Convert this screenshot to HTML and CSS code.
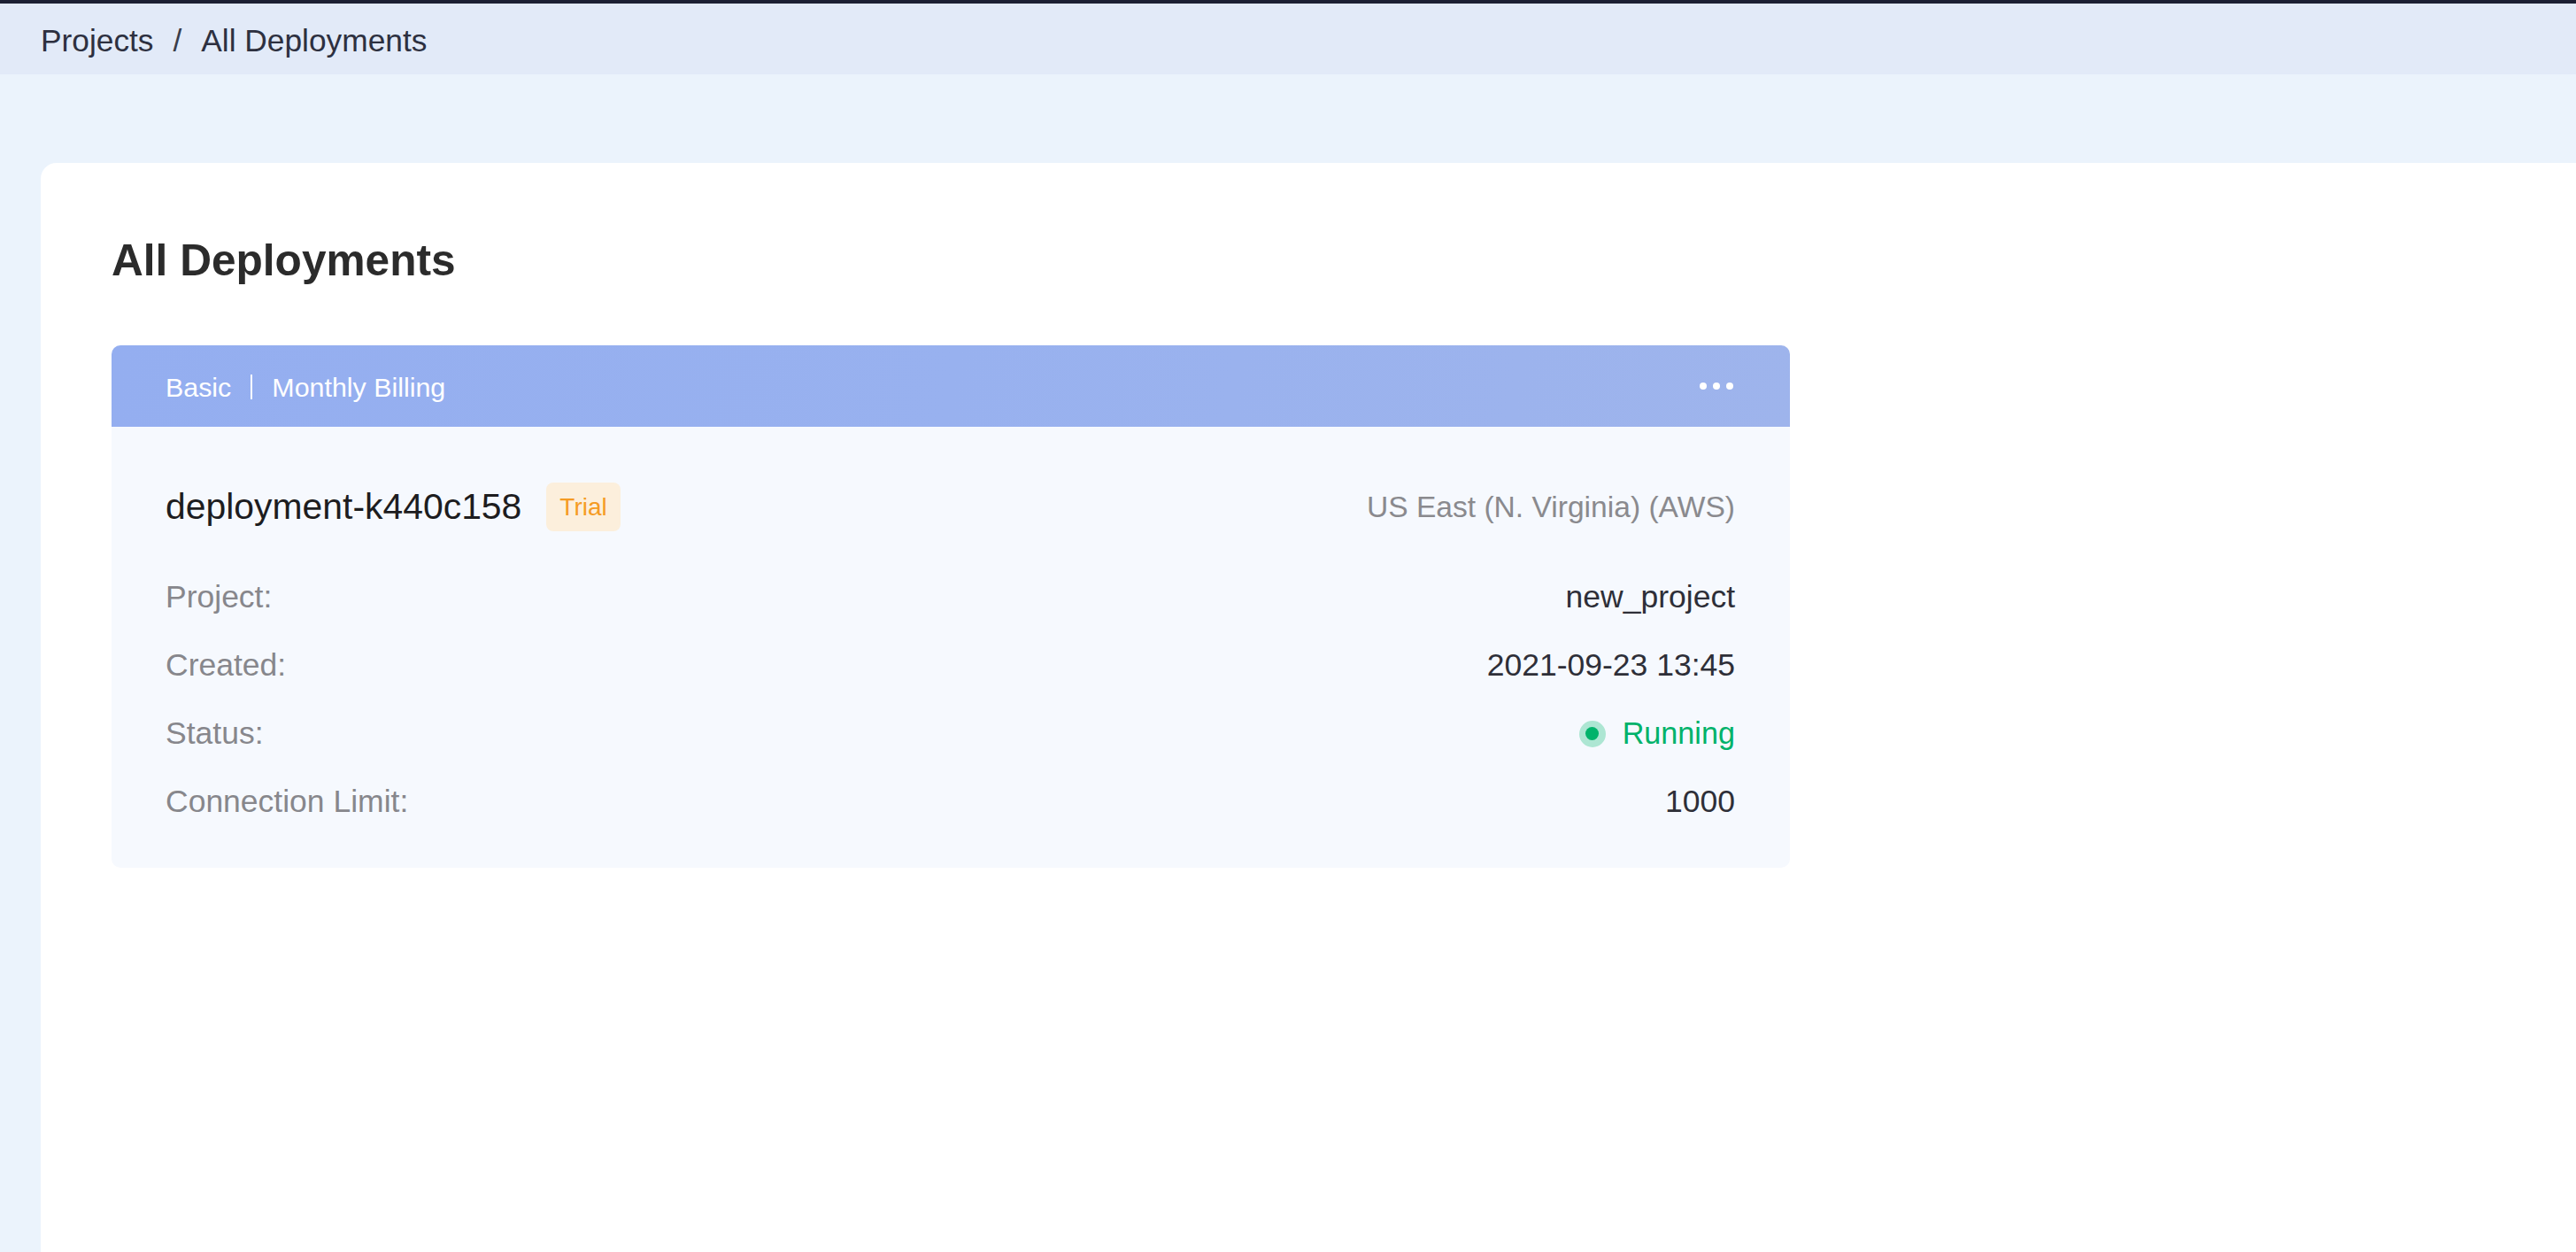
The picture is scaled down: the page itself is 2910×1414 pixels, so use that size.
FILE: index.html
```html
<!DOCTYPE html>
<html lang="en">
<head>
<meta charset="utf-8">
<title>All Deployments</title>
<link rel="stylesheet" href="styles.css">
</head>
<body>
  <div class="topline"></div>
  <nav class="breadcrumb">
    <span class="crumb">Projects</span>
    <span class="crumb-sep">/</span>
    <span class="crumb">All Deployments</span>
  </nav>
  <main class="main">
    <section class="panel">
      <h1 class="title">All Deployments</h1>
      <div class="dep-card">
        <div class="dep-head">
          <div class="dep-plan">
            <span>Basic</span>
            <span class="plan-sep"></span>
            <span>Monthly Billing</span>
          </div>
          <div class="more" aria-label="More">
            <span class="dot"></span><span class="dot"></span><span class="dot"></span>
          </div>
        </div>
        <div class="dep-body">
          <div class="dep-title-row">
            <div class="dep-name-wrap">
              <span class="dep-name">deployment-k440c158</span>
              <span class="badge-trial">Trial</span>
            </div>
            <span class="dep-region">US East (N. Virginia) (AWS)</span>
          </div>
          <div class="dep-rows">
            <div class="dep-row"><span class="label">Project:</span><span class="value">new_project</span></div>
            <div class="dep-row"><span class="label">Created:</span><span class="value">2021-09-23 13:45</span></div>
            <div class="dep-row"><span class="label">Status:</span><span class="value status"><span class="status-dot"><span class="status-core"></span></span>Running</span></div>
            <div class="dep-row"><span class="label">Connection Limit:</span><span class="value">1000</span></div>
          </div>
        </div>
      </div>
    </section>
  </main>
</body>
</html>
```

FILE: styles.css
```css
* { box-sizing: border-box; }

html, body {
  margin: 0;
  padding: 0;
}

body {
  background: #ebf3fc;
  font-family: "Liberation Sans", Arial, Helvetica, sans-serif;
  color: #2d3040;
  overflow: hidden;
}

.topline {
  height: 4px;
  background: #1c2033;
}

.breadcrumb {
  height: 80px;
  background: #e2eaf8;
  display: flex;
  align-items: center;
  padding: 3px 0 0 46px;
  font-size: 35.3px;
  color: #2d3040;
}

.crumb-sep {
  margin: 0 22px;
  color: #3a3d4a;
}

.main {
  padding: 100px 0 0 46px;
}

.panel {
  background: #ffffff;
  border-top-left-radius: 18px;
  min-height: calc(100vh - 184px);
  padding: 81px 0 0 80px;
}

.title {
  margin: 0 0 68px 0;
  font-size: 49.6px;
  line-height: 56px;
  font-weight: 700;
  color: #2b2b2b;
  padding-top: 1px;
  height: 57px;
}

.dep-card {
  width: 1896px;
  border-radius: 10px;
  overflow: hidden;
  background: #f6f9fe;
}

.dep-head {
  height: 92px;
  background: linear-gradient(100deg, #94aef0 0%, #98b1ef 50%, #9eb4ec 100%);
  display: flex;
  align-items: center;
  justify-content: space-between;
  padding: 2px 62px 0 61px;
  color: #ffffff;
  font-size: 30.4px;
}

.dep-plan {
  display: flex;
  align-items: center;
}

.plan-sep {
  width: 2px;
  height: 28px;
  background: #ffffff;
  margin: 0 22px;
}

.more {
  display: flex;
  align-items: center;
  gap: 7px;
  padding-right: 2px;
  margin-top: -2px;
}

.dot {
  width: 8px;
  height: 8px;
  border-radius: 50%;
  background: #ffffff;
}

.dep-body {
  padding: 63px 62px 36px 61px;
}

.dep-title-row {
  display: flex;
  align-items: center;
  justify-content: space-between;
  height: 55px;
  margin-bottom: 36px;
}

.dep-name-wrap {
  display: flex;
  align-items: center;
}

.dep-name {
  font-size: 40.9px;
  color: #1d1d1f;
}

.badge-trial {
  margin-left: 28px;
  height: 55px;
  line-height: 55px;
  padding: 0 15px;
  border-radius: 8px;
  background: #fcefdc;
  color: #f59b23;
  font-size: 28px;
}

.dep-region {
  font-size: 33.6px;
  color: #8a8a8e;
}

.dep-row {
  display: flex;
  justify-content: space-between;
  align-items: center;
  height: 77px;
  line-height: 77px;
  font-size: 35.5px;
}

.label {
  color: #87878c;
}

.value {
  color: #2e2f38;
}

.status {
  display: flex;
  align-items: center;
  color: #00b26a;
  font-size: 34.2px;
}

.status-dot {
  width: 30px;
  height: 30px;
  border-radius: 50%;
  background: #ade6d3;
  display: flex;
  align-items: center;
  justify-content: center;
  margin-right: 19px;
}

.status-core {
  width: 15px;
  height: 15px;
  border-radius: 50%;
  background: #00b36b;
}
```
